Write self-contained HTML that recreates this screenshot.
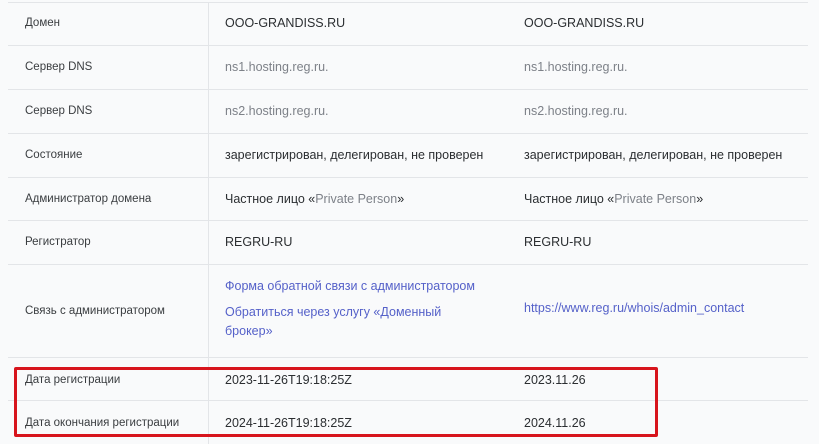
<!DOCTYPE html>
<html><head><meta charset="utf-8"><style>
body{margin:0;width:819px;height:444px;background:#f9fafb;font-family:"Liberation Sans",sans-serif;position:relative;overflow:hidden;color:#2b2e31}
.h{position:absolute;left:8px;width:800px;height:1px;background:#e3e5e8}
.v{position:absolute;left:208px;top:2px;width:1px;height:442px;background:#e3e5e8}
.t{position:absolute;white-space:nowrap;line-height:16px}
.l{left:25px;font-size:11.5px;color:#3a3d40}
.a{left:225px;font-size:12.5px}
.b{left:524px;font-size:12.5px}
.g{color:#7d8188}
.k{color:#5561c9}
.box{position:absolute;left:14px;top:367px;width:638px;height:64px;border:3px solid #d7141c;border-radius:2px}
</style></head><body>
<div class="h" style="top:2px"></div>
<div class="h" style="top:45px"></div>
<div class="h" style="top:89px"></div>
<div class="h" style="top:133px"></div>
<div class="h" style="top:177px"></div>
<div class="h" style="top:220px"></div>
<div class="h" style="top:264px"></div>
<div class="h" style="top:357px"></div>
<div class="h" style="top:400px"></div>
<div class="v"></div>

<div class="t l" style="top:15px">Домен</div>
<div class="t a" style="top:15px">OOO-GRANDISS.RU</div>
<div class="t b" style="top:15px">OOO-GRANDISS.RU</div>

<div class="t l" style="top:59px">Сервер DNS</div>
<div class="t a g" style="top:59px">ns1.hosting.reg.ru.</div>
<div class="t b g" style="top:59px">ns1.hosting.reg.ru.</div>

<div class="t l" style="top:103px">Сервер DNS</div>
<div class="t a g" style="top:103px">ns2.hosting.reg.ru.</div>
<div class="t b g" style="top:103px">ns2.hosting.reg.ru.</div>

<div class="t l" style="top:147px">Состояние</div>
<div class="t a" style="top:147px">зарегистрирован, делегирован, не проверен</div>
<div class="t b" style="top:147px">зарегистрирован, делегирован, не проверен</div>

<div class="t l" style="top:191px">Администратор домена</div>
<div class="t a" style="top:191px">Частное лицо «<span class="g">Private Person</span>»</div>
<div class="t b" style="top:191px">Частное лицо «<span class="g">Private Person</span>»</div>

<div class="t l" style="top:234px">Регистратор</div>
<div class="t a" style="top:234px">REGRU-RU</div>
<div class="t b" style="top:234px">REGRU-RU</div>

<div class="t l" style="top:303px">Связь с администратором</div>
<div class="t a k" style="top:278px">Форма обратной связи с администратором</div>
<div class="t a k" style="top:304px">Обратиться через услугу «Доменный</div>
<div class="t a k" style="top:323px">брокер»</div>
<div class="t b k" style="top:300px">https://www.reg.ru/whois/admin_contact</div>

<div class="t l" style="top:372px">Дата регистрации</div>
<div class="t a" style="top:372px">2023-11-26T19:18:25Z</div>
<div class="t b" style="top:372px">2023.11.26</div>

<div class="t l" style="top:415px">Дата окончания регистрации</div>
<div class="t a" style="top:415px">2024-11-26T19:18:25Z</div>
<div class="t b" style="top:415px">2024.11.26</div>

<div class="box"></div>
</body></html>
